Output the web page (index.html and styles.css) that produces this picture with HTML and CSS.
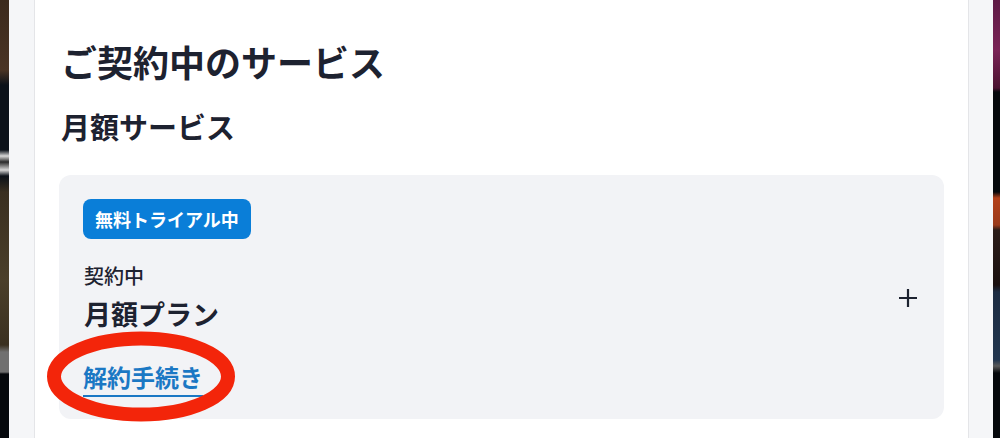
FILE: index.html
```html
<!DOCTYPE html>
<html lang="ja">
<head>
  <meta charset="UTF-8" />
  <title>ご契約中のサービス</title>
  <meta name="viewport" content="width=device-width, initial-scale=1.0"/>
  <link rel="stylesheet" href="styles.css">
</head>
<body>

  <!-- video behind the modal -->
  <div class="backdrop backdrop-left"></div>
  <div class="gutter gutter-left"></div>

  <!-- Modal panel -->
  <main class="panel">
    <h1 class="panel-title">ご契約中のサービス</h1>
    <h2 class="section-title">月額サービス</h2>

    <div class="plan-card">
      <span class="badge">無料トライアル中</span>

      <div class="plan-row">
        <div class="plan-info">
          <div class="plan-status">契約中</div>
          <div class="plan-name">月額プラン</div>
        </div>
        <svg class="plus" width="20" height="20" viewBox="0 0 20 20">
          <path d="M10 1v18M1 10h18" stroke="#1d2230" stroke-width="2.2" fill="none"/>
        </svg>
      </div>

      <div class="cancel-wrap">
        <a class="cancel-link" href="#">解約手続き</a>
        <!-- red circle drawn on the screenshot -->
        <svg class="mark" width="200" height="100" viewBox="0 0 200 100">
          <ellipse cx="98" cy="48.5" rx="87" ry="38" fill="none" stroke="#f3250a" stroke-width="14"/>
        </svg>
      </div>
    </div>
  </main>

  <div class="gutter gutter-right"></div>
  <div class="backdrop backdrop-right"></div>

</body>
</html>
```

FILE: styles.css
```css
* {
  box-sizing: border-box;
}

body {
  margin: 0;
  height: 438px;
  display: flex;
  overflow: hidden;
  font-family: "Noto Sans CJK JP", "Noto Sans", sans-serif;
  color: #1d2230;
  background: #05080c;
}

.backdrop {
  flex: none;
}

.backdrop-left {
  width: 9px;
  background: linear-gradient(to bottom,
    #3b2a1d 0, #4a3424 70px, #0b1119 85px, #0b1119 150px,
    #d8d8d8 156px, #2a2a2a 162px, #d8d8d8 170px, #0b1119 176px,
    #3a2f20 192px, #4b3f2a 280px, #3a3020 345px,
    #707070 352px, #707070 372px, #05080c 374px);
}

.backdrop-right {
  width: 7px;
  background: linear-gradient(to bottom,
    #5e1a45 0, #7a2356 50px, #4a1230 88px, #05080c 92px, #05080c 192px,
    #b3401a 198px, #9a3a1a 225px, #2a1c18 230px, #1a1010 285px,
    #1c2c42 292px, #22364f 360px, #5a5a5a 366px, #05080c 373px);
}

.gutter {
  flex: none;
  background: #f5f6f8;
}

.gutter-left {
  border-right: 1px solid #e4e5e8;
  width: 26px;
}

.gutter-right {
  border-left: 1px solid #e4e5e8;
  width: 25px;
}

.panel {
  flex: 1;
  background: #fff;
  padding: 34px 24px 0 24px;
}

.panel-title {
  margin: 0 0 0 2px;
  font-size: 36px;
  line-height: 54px;
  font-weight: 700;
}

.section-title {
  margin: 18px 0 0 2px;
  font-size: 29px;
  line-height: 40px;
  font-weight: 700;
}

.plan-card {
  margin-top: 29px;
  height: 244px;
  background: #f2f3f6;
  border-radius: 12px;
  padding: 24px 26px 0 24px;
}

.badge {
  display: inline-block;
  background: #0a7ed8;
  color: #fff;
  font-size: 18px;
  font-weight: 700;
  line-height: 24px;
  padding: 8px 12px;
  border-radius: 8px;
}

.plan-row {
  display: flex;
  align-items: center;
  justify-content: space-between;
  margin-top: 24px;
}

.plan-info {
  padding-left: 1px;
}

.plan-status {
  font-size: 20px;
  line-height: 26px;
  font-weight: 500;
}

.plan-name {
  margin-top: 7px;
  font-size: 27px;
  line-height: 36px;
  font-weight: 700;
}

.plus {
  margin-top: 0;
}

.cancel-wrap {
  position: relative;
  margin-top: 30px;
}

.cancel-link {
  font-size: 24px;
  line-height: 30px;
  font-weight: 700;
  color: #1b78c4;
  text-decoration: none;
  border-bottom: 2px solid #1b78c4;
  padding-bottom: 1px;
}

.mark {
  position: absolute;
  left: -40px;
  top: -34px;
}
```
